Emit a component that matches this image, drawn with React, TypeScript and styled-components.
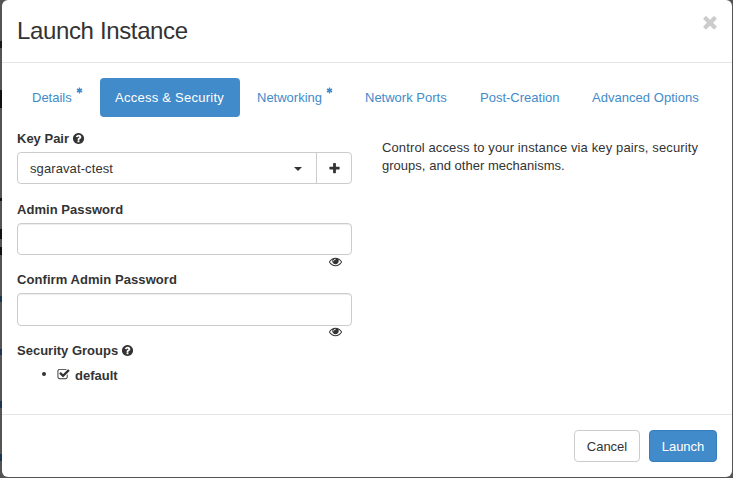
import React from "react";
import styled, { createGlobalStyle } from "styled-components";

const Global = createGlobalStyle`
  * { box-sizing: border-box; }
  body { margin: 0; overflow: hidden; font: 13px/18px "Liberation Sans", Arial, sans-serif; color: #333; }
`;

const Backdrop = styled.div`
  width: 733px;
  height: 478px;
  padding: 0 1px 1px 2px;
  background:
    linear-gradient(#111, #111) 0 90px / 2px 18px no-repeat,
    linear-gradient(#1a1a1a, #1a1a1a) 0 41px / 2px 7px no-repeat,
    linear-gradient(#111, #111) 0 198px / 2px 3px no-repeat,
    linear-gradient(#111, #111) 0 229px / 2px 10px no-repeat,
    linear-gradient(#111, #111) 0 247px / 2px 8px no-repeat,
    linear-gradient(#1b3552, #1b3552) 0 296px / 2px 6px no-repeat,
    linear-gradient(#1b3552, #1b3552) 0 349px / 2px 6px no-repeat,
    linear-gradient(#1b3552, #1b3552) 0 401px / 2px 7px no-repeat,
    linear-gradient(#1b3552, #1b3552) 0 454px / 2px 7px no-repeat,
    #545454;
`;

const Dialog = styled.div`
  display: flex;
  flex-direction: column;
  width: 730px;
  height: 477px;
  background: #fff;
  border-radius: 6px;
`;

const Header = styled.header`
  display: flex;
  justify-content: space-between;
  height: 63px;
  padding: 15px 12px 0 15px;
  border-bottom: 1px solid #e5e5e5;
`;

const Title = styled.h4`
  margin: 0;
  font-size: 24px;
  font-weight: 400;
  line-height: 32px;
  letter-spacing: -0.36px;
`;

const Close = styled.button`
  height: 20px;
  margin-top: -3px;
  padding: 0;
  border: 0;
  background: none;
  color: #ccc;
`;

const Glyph = styled.svg<{ $size: number }>`
  display: block;
  flex: none;
  width: ${(p) => p.$size}px;
  height: ${(p) => p.$size}px;
  fill: currentColor;
`;

const Body = styled.div`
  flex: 1;
  padding: 15px;
`;

const Tabs = styled.nav`
  display: grid;
  grid-template-columns: 81px 140px 106px 113px 110px 137px;
  column-gap: 2px;
  height: 39px;
`;

const Tab = styled.a<{ $active?: boolean }>`
  display: flex;
  gap: 4px;
  padding: 11px 0 0 15px;
  border-radius: 4px;
  white-space: nowrap;
  color: ${(p) => (p.$active ? "#fff" : "#428bca")};
  background: ${(p) => (p.$active ? "#428bca" : "transparent")};
`;

const Required = styled.span`
  margin-top: -2px;
`;

const Txt = styled.span<{ $ls?: number }>`
  letter-spacing: ${(p) => p.$ls ?? 0}px;
  white-space: nowrap;
`;

const Columns = styled.div`
  display: grid;
  grid-template-columns: 335px 335px;
  column-gap: 30px;
`;

const Form = styled.form`
  padding-top: 13px;
`;

const Label = styled.label`
  display: flex;
  align-items: center;
  gap: 3px;
  height: 17px;
  margin-bottom: 5px;
  font-weight: 700;
`;

const InputGroup = styled.div`
  display: flex;
  height: 32px;
  margin-bottom: 17px;
  border: 1px solid #ccc;
  border-radius: 4px;
`;

const Select = styled.div`
  display: flex;
  flex: 1;
  align-items: center;
  justify-content: space-between;
  padding: 2px 14px 0 12px;
`;

const Caret = styled.span`
  border: 4px solid transparent;
  border-top-color: #333;
  border-bottom: 0;
`;

const AddButton = styled.button`
  display: flex;
  align-items: center;
  justify-content: center;
  width: 35px;
  padding: 0;
  border: 0;
  border-left: 1px solid #ccc;
  background: none;
  color: #333;
`;

const PasswordInput = styled.input<{ $h: number }>`
  display: block;
  width: 100%;
  height: ${(p) => p.$h}px;
  padding: 6px 12px;
  border: 1px solid #ccc;
  border-radius: 4px;
  box-shadow: inset 0 1px 1px rgba(0, 0, 0, 0.075);
`;

const Reveal = styled.div<{ $raise?: boolean }>`
  display: flex;
  justify-content: flex-end;
  height: 16px;
  padding-right: 10px;
  margin: ${(p) => (p.$raise ? "-1px 0 1px" : "0")};
`;

const Groups = styled.ul`
  display: flex;
  margin: 0;
  padding: 1px 0 0 25px;
  list-style: none;
`;

const Group = styled.li`
  display: flex;
  align-items: center;
  height: 18px;
  font-weight: 700;

  &::before {
    content: "";
    width: 4px;
    height: 4px;
    margin-right: 11px;
    border-radius: 50%;
    background: #333;
  }
`;

const GroupName = styled.span`
  margin: 3px 0 0 5px;
`;

const Help = styled.p`
  margin: 22px 0 0;
`;

const Footer = styled.footer`
  display: flex;
  justify-content: flex-end;
  gap: 9px;
  height: 63px;
  padding: 15px 15px 0;
  border-top: 1px solid #e5e5e5;
`;

const Button = styled.button<{ $primary?: boolean }>`
  width: ${(p) => (p.$primary ? 68 : 66)}px;
  height: 32px;
  padding: 2px 0 0;
  border: 1px solid ${(p) => (p.$primary ? "#357ebd" : "#ccc")};
  border-radius: 4px;
  background: ${(p) => (p.$primary ? "#428bca" : "#fff")};
  color: ${(p) => (p.$primary ? "#fff" : "#333")};
  font: 13px/18px "Liberation Sans", Arial, sans-serif;
`;

const paths = {
  times:
    "M1490 1322q0 40-28 68l-136 136q-28 28-68 28t-68-28l-294-294-294 294q-28 28-68 28t-68-28l-136-136q-28-28-28-68t28-68l294-294-294-294q-28-28-28-68t28-68l136-136q28-28 68-28t68 28l294 294 294-294q28-28 68-28t68 28l136 136q28 28 28 68t-28 68l-294 294 294 294q28 28 28 68z",
  plus:
    "M1600 736v192q0 40-28 68t-68 28h-416v416q0 40-28 68t-68 28h-192q-40 0-68-28t-28-68v-416h-416q-40 0-68-28t-28-68v-192q0-40 28-68t68-28h416v-416q0-40 28-68t68-28h192q40 0 68 28t28 68v416h416q40 0 68 28t28 68z",
  question:
    "M1024 1376v-192q0-14-9-23t-23-9h-192q-14 0-23 9t-9 23v192q0 14 9 23t23 9h192q14 0 23-9t9-23zm256-672q0-88-55.5-163t-138.5-116-170-41q-243 0-371 213-15 24 8 42l132 100q7 6 19 6 16 0 25-12 53-68 86-92 34-24 86-24 48 0 85.5 26t37.5 59q0 38-20 61t-68 45q-63 28-115.5 86.5t-52.5 125.5v36q0 14 9 23t23 9h192q14 0 23-9t9-23q0-19 21.5-49.5t54.5-49.5q32-18 49-28.5t46-35 44.5-48 28-60.5 12.5-81zm384 192q0 209-103 385.5t-279.5 279.5-385.5 103-385.5-103-279.5-279.5-103-385.5 103-385.5 279.5-279.5 385.5-103 385.5 103 279.5 279.5 103 385.5z",
  eye:
    "M1664 960q-152-236-381-353 61 104 61 225 0 185-131.5 316.5t-316.5 131.5-316.5-131.5-131.5-316.5q0-121 61-225-229 117-381 353 133 205 333.5 326.5t434.5 121.5 434.5-121.5 333.5-326.5zm-720-384q0-20-14-34t-34-14q-125 0-214.5 89.5t-89.5 214.5q0 20 14 34t34 14 34-14 14-34q0-86 61-147t147-61q20 0 34-14t14-34zm848 384q0 34-20 69-140 230-376.5 368.5t-499.5 138.5-499.5-139-376.5-368q-20-35-20-69t20-69q140-229 376.5-368t499.5-139 499.5 139 376.5 368q20 35 20 69z",
  asterisk:
    "M1546 1050q46 26 59.5 77.5t-12.5 97.5l-64 110q-26 46-77.5 59.5t-97.5-12.5l-266-153v307q0 52-38 90t-90 38h-128q-52 0-90-38t-38-90v-307l-266 153q-46 26-97.5 12.5t-77.5-59.5l-64-110q-26-46-12.5-97.5t59.5-77.5l266-154-266-154q-46-26-59.5-77.5t12.5-97.5l64-110q26-46 77.5-59.5t97.5 12.5l266 153v-307q0-52 38-90t90-38h128q52 0 90 38t38 90v307l266-153q46-26 97.5-12.5t77.5 59.5l64 110q26 46 12.5 97.5t-59.5 77.5l-266 154z",
  check:
    "M1472 930v318q0 119-84.5 203.5t-203.5 84.5h-832q-119 0-203.5-84.5t-84.5-203.5v-832q0-119 84.5-203.5t203.5-84.5h832q63 0 117 25 15 7 18 23 3 17-9 29l-49 49q-10 10-23 10-3 0-9-2-23-6-45-6h-832q-66 0-113 47t-47 113v832q0 66 47 113t113 47h832q66 0 113-47t47-113v-254q0-13 9-22l64-64q10-10 23-10 6 0 12 3 20 8 20 29zm231-489l-814 814q-24 24-57 24t-57-24l-430-430q-24-24-24-57t24-57l110-110q24-24 57-24t57 24l263 263 647-647q24-24 57-24t57 24l110 110q24 24 24 57t-24 57z",
};

function Icon({ name, size = 13 }: { name: keyof typeof paths; size?: number }) {
  return (
    <Glyph $size={size} viewBox="0 0 1792 1792" aria-hidden="true">
      <path d={paths[name]} />
    </Glyph>
  );
}

const tabs = [
  { label: "Details", required: true },
  { label: "Access & Security", active: true, spacing: 0.25 },
  { label: "Networking", required: true },
  { label: "Network Ports" },
  { label: "Post-Creation" },
  { label: "Advanced Options", spacing: 0.04 },
];

export default function App() {
  return (
    <>
      <Global />
      <Backdrop>
        <Dialog role="dialog">
          <Header>
            <Title>Launch Instance</Title>
            <Close aria-label="Close"><Icon name="times" size={20} /></Close>
          </Header>
          <Body>
            <Tabs>
              {tabs.map((t) => (
                <Tab key={t.label} $active={t.active}>
                  <Txt $ls={t.spacing}>{t.label}</Txt>
                  {t.required && <Required><Icon name="asterisk" size={7} /></Required>}
                </Tab>
              ))}
            </Tabs>
            <Columns>
              <Form>
                <Label><Txt>Key Pair</Txt><Icon name="question" /></Label>
                <InputGroup>
                  <Select><Txt $ls={0.1}>sgaravat-ctest</Txt><Caret /></Select>
                  <AddButton type="button" aria-label="Add key pair"><Icon name="plus" /></AddButton>
                </InputGroup>
                <Label><Txt $ls={0.05}>Admin Password</Txt></Label>
                <PasswordInput type="password" $h={32} />
                <Reveal><Icon name="eye" /></Reveal>
                <Label><Txt $ls={0.07}>Confirm Admin Password</Txt></Label>
                <PasswordInput type="password" $h={33} />
                <Reveal $raise><Icon name="eye" /></Reveal>
                <Label><Txt>Security Groups</Txt><Icon name="question" /></Label>
                <Groups>
                  <Group><Icon name="check" /><GroupName>default</GroupName></Group>
                </Groups>
              </Form>
              <Help>
                <Txt $ls={0.125}>Control access to your instance via key pairs, security</Txt>
                <br />
                <Txt $ls={0.02}>groups, and other mechanisms.</Txt>
              </Help>
            </Columns>
          </Body>
          <Footer>
            <Button><Txt>Cancel</Txt></Button>
            <Button $primary><Txt>Launch</Txt></Button>
          </Footer>
        </Dialog>
      </Backdrop>
    </>
  );
}
